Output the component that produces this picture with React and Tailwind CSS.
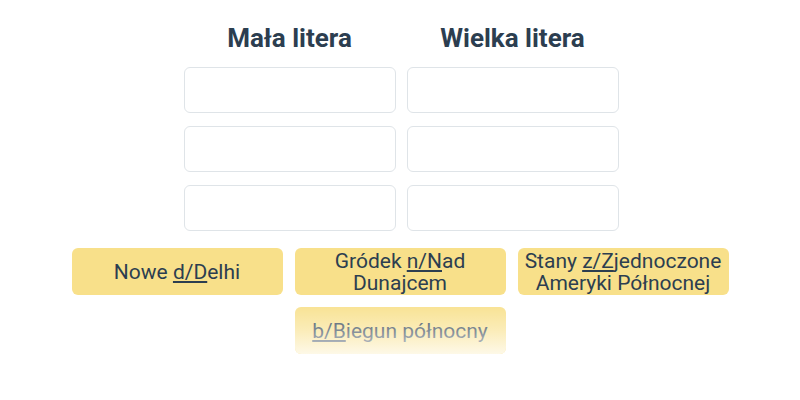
import React from "react";

const Opt = ({ pre, mark, post, line2, faded }) => (
  <button className="relative w-[211px] h-[47px] rounded-md bg-[#f8e08a] text-[#2c3e50] text-[21px] leading-[22px] flex flex-col items-center justify-center overflow-hidden">
    <span>
      {pre}
      <span className="underline underline-offset-2">{mark}</span>
      {post}
    </span>
    {line2 && <span>{line2}</span>}
    {faded && (
      <span className="absolute inset-0 bg-gradient-to-b from-white/10 via-white/40 to-white/80" />
    )}
  </button>
);

export default function App() {
  return (
    <div className="w-[800px] h-[400px] bg-white flex flex-col items-center pt-[22px] font-['Roboto',sans-serif]">
      <div className="grid grid-cols-[212px_212px] gap-x-[11px] gap-y-[13px] ml-[2px]">
        <h2 className="text-center text-[26px] leading-[32px] font-bold text-[#2c3e50]">Mała litera</h2>
        <h2 className="text-center text-[26px] leading-[32px] font-bold text-[#2c3e50]">Wielka litera</h2>
        {[0, 1, 2, 3, 4, 5].map((i) => (
          <div key={i} className="h-[46px] rounded-md border border-[#dfe4e8] bg-white" />
        ))}
      </div>
      <div className="flex flex-wrap justify-center gap-[12px] w-[658px] mt-[17px]">
        <Opt pre="Nowe " mark="d/D" post="elhi" />
        <Opt pre="Gródek " mark="n/N" post="ad" line2="Dunajcem" />
        <Opt pre="Stany " mark="z/Z" post="jednoczone" line2="Ameryki Północnej" />
        <Opt pre="" mark="b/B" post="iegun północny" faded />
      </div>
    </div>
  );
}
